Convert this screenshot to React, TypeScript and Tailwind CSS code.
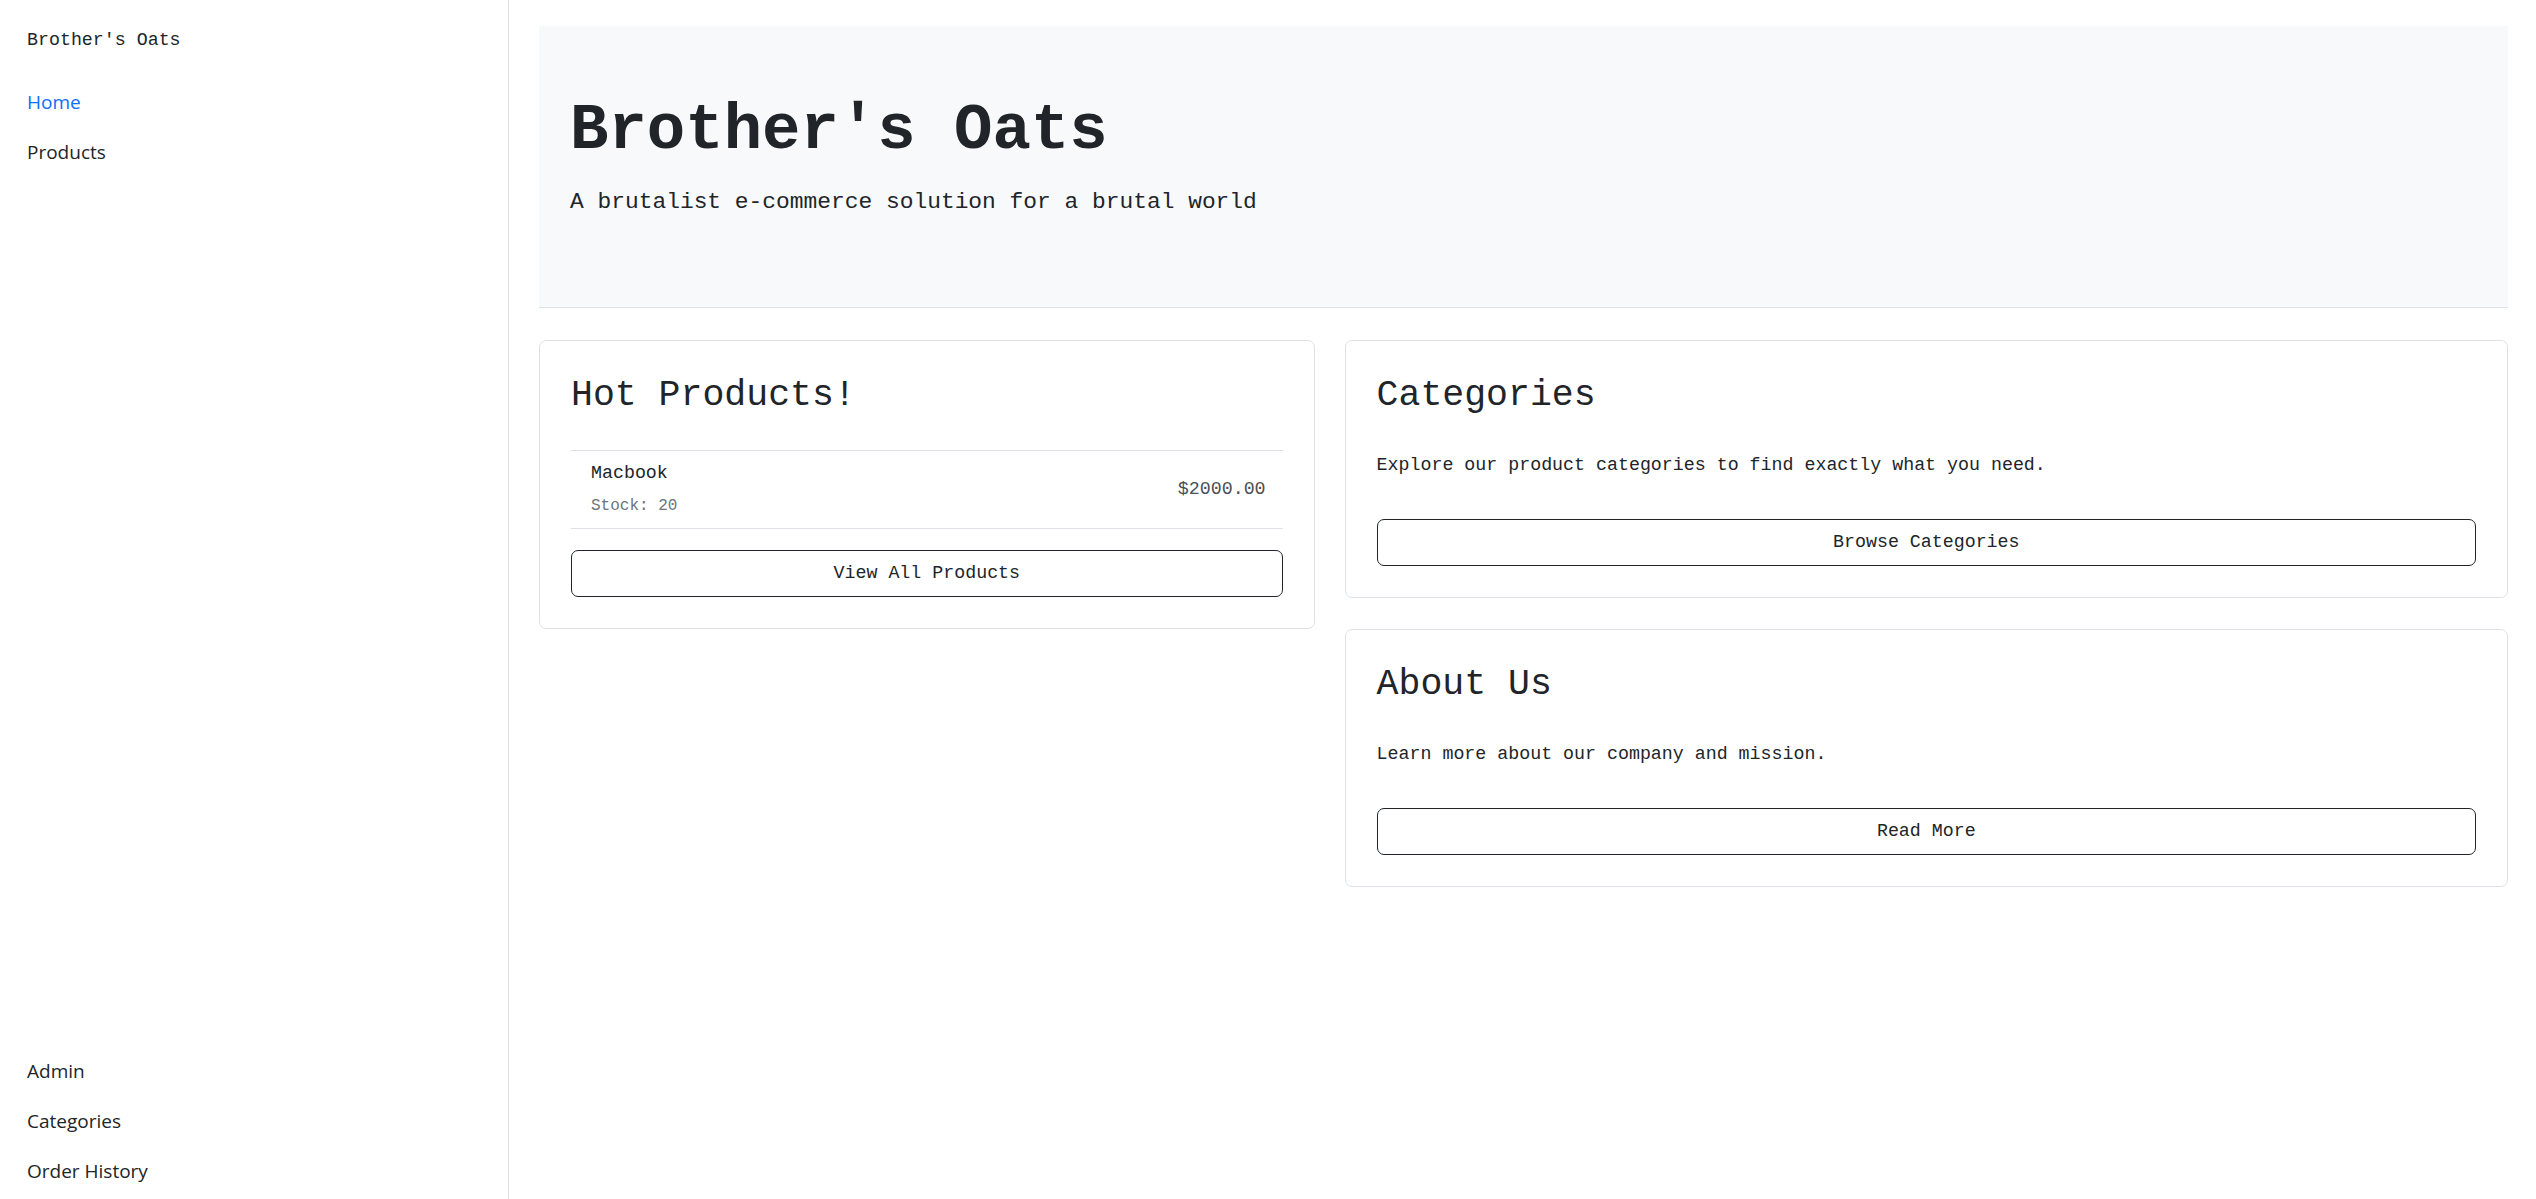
const mono = "font-['Liberation_Mono','DejaVu_Sans_Mono',monospace]";

function SideLink({ label, active }: { label: string; active?: boolean }) {
  return (
    <a
      href="#"
      className={
        "block h-[50px] leading-[50px] text-[19px] font-['Open_Sans',sans-serif] " +
        (active ? "text-[#0d6efd]" : "text-[#212529]")
      }
    >
      {label}
    </a>
  );
}

function Card({ title, children }: { title: string; children: React.ReactNode }) {
  return (
    <div className="rounded-[7px] border border-[#dee2e6] bg-white px-[31px] pt-[31px] pb-[31px]">
      <h2 className="text-[36.5px] leading-[48px] text-[#212529]">{title}</h2>
      {children}
    </div>
  );
}

function OutlineButton({ label }: { label: string }) {
  return (
    <button className="h-[47px] w-full rounded-[7px] border border-[#212529] bg-white text-[18.3px] text-[#212529]">
      {label}
    </button>
  );
}

export default function App() {
  return (
    <div className={"flex min-h-[1199px] bg-white text-[#212529] " + mono}>
      <aside className="flex w-[509px] shrink-0 flex-col justify-between border-r border-[#dee2e6] px-[27px] pt-[27px] pb-[3px]">
        <div>
          <div className="text-[18.3px] leading-[26px] text-[#212529]">Brother's Oats</div>
          <nav className="mt-[24px]">
            <SideLink label="Home" active />
            <SideLink label="Products" />
          </nav>
        </div>
        <nav>
          <SideLink label="Admin" />
          <SideLink label="Categories" />
          <SideLink label="Order History" />
        </nav>
      </aside>

      <main className="flex-1 pl-[30px] pr-[28px] pt-[26px]">
        <section className="border-b border-[#dee2e6] bg-[#f8f9fa] px-[31px] pt-[66px] pb-[87px]">
          <h1 className="text-[64px] font-bold leading-[78px] text-[#212529]">Brother's Oats</h1>
          <p className="mt-[14px] text-[22.9px] leading-[36px]">A brutalist e-commerce solution for a brutal world</p>
        </section>

        <div className="mt-[32px] grid grid-cols-[2fr_3fr] items-start gap-[30px]">
          <Card title="Hot Products!">
            <div className="mt-[30px] flex items-center justify-between border-y border-[#dee2e6] pl-[20px] pr-[17px] py-[8px]">
              <div className="flex flex-col gap-[5px]">
                <div className="text-[18.3px] leading-[28px] text-[#212529]">Macbook</div>
                <div className="text-[16px] leading-[28px] text-[#6c757d]">Stock: 20</div>
              </div>
              <div className="text-[18.3px] text-[#495057]">$2000.00</div>
            </div>
            <div className="mt-[21px]">
              <OutlineButton label="View All Products" />
            </div>
          </Card>

          <div className="flex flex-col gap-[31px]">
            <Card title="Categories">
              <p className="mt-[30px] text-[18.3px] leading-[30px]">
                Explore our product categories to find exactly what you need.
              </p>
              <div className="mt-[39px]">
                <OutlineButton label="Browse Categories" />
              </div>
            </Card>
            <Card title="About Us">
              <p className="mt-[30px] text-[18.3px] leading-[30px]">Learn more about our company and mission.</p>
              <div className="mt-[39px]">
                <OutlineButton label="Read More" />
              </div>
            </Card>
          </div>
        </div>
      </main>
    </div>
  );
}
